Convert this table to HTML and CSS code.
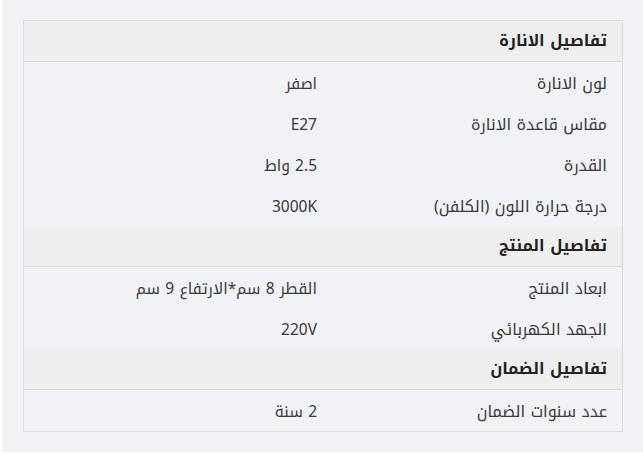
FILE: index.html
```html
<!DOCTYPE html>
<html lang="ar" dir="rtl">
<head>
<meta charset="utf-8">
<link rel="stylesheet" href="styles.css">
</head>
<body>
<div class="page">
  <div class="specs">
    <div class="group">تفاصيل الانارة</div>
    <div class="row"><div class="label">لون الانارة</div><div class="value">اصفر</div></div>
    <div class="row"><div class="label">مقاس قاعدة الانارة</div><div class="value">E27</div></div>
    <div class="row"><div class="label">القدرة</div><div class="value">2.5 واط</div></div>
    <div class="row"><div class="label">درجة حرارة اللون (الكلفن)</div><div class="value">3000K</div></div>
    <div class="group">تفاصيل المنتج</div>
    <div class="row"><div class="label">ابعاد المنتج</div><div class="value">القطر 8 سم*الارتفاع 9 سم</div></div>
    <div class="row"><div class="label">الجهد الكهربائي</div><div class="value">220V</div></div>
    <div class="group">تفاصيل الضمان</div>
    <div class="row"><div class="label">عدد سنوات الضمان</div><div class="value">2 سنة</div></div>
  </div>
</div>
</body>
</html>
```
FILE: styles.css
```css
html, body {
  margin: 0;
  padding: 0;
  background: #ffffff;
}
body {
  padding-left: 2px;
  font-family: "Noto Kufi Arabic", "Noto Sans", "DejaVu Sans", sans-serif;
}
.page {
  background: #f1f2f5;
  padding: 20px 20px 20px 21px;
  width: 600px;
}
.specs {
  width: 598px;
  border: 1px solid #dcdcdc;
  display: flex;
  flex-direction: column;
}
.group {
  height: 40px;
  line-height: 40px;
  background: #eeeeee;
  border-bottom: 1px solid #dcdcdc;
  padding: 0 15px;
  font-size: 16px;
  font-weight: 700;
  color: #222222;
}
.row {
  height: 41px;
  display: grid;
  grid-template-columns: 290px 1fr;
  align-items: center;
  padding-top: 2px;
  box-sizing: border-box;
}
.label, .value {
  padding: 0 15px;
  font-size: 16px;
  line-height: 20px;
  color: #3a3a3a;
  white-space: nowrap;
}
.value {
  font-size: 15.5px;
}
```
